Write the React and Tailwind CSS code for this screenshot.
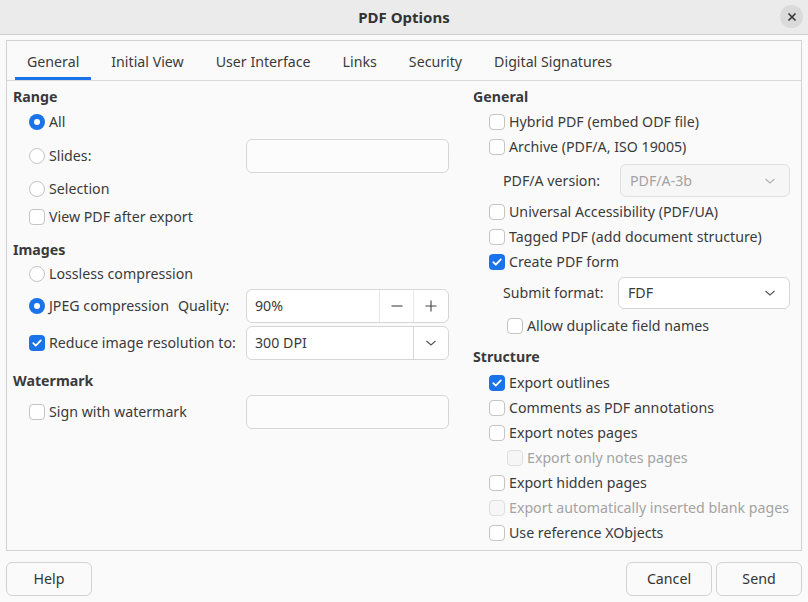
import React from 'react';

const font = { fontFamily: '"Noto Sans", "Open Sans", sans-serif' };

const Chevron = ({ className = '' }) => (
  <svg width="12" height="8" viewBox="0 0 12 8" className={className}>
    <path d="M1.5 2 L6 6 L10.5 2" fill="none" stroke="currentColor" strokeWidth="1.1" />
  </svg>
);

const Radio = ({ checked }) =>
  checked ? (
    <span className="w-4 h-4 rounded-full bg-[#1a73e8] flex items-center justify-center shrink-0">
      <span className="w-[6px] h-[6px] rounded-full bg-white" />
    </span>
  ) : (
    <span className="w-4 h-4 rounded-full border border-[#c4c4c4] bg-white shrink-0" />
  );

const Check = ({ checked, disabled }) =>
  checked ? (
    <span className="w-4 h-4 rounded-[4px] bg-[#1a73e8] flex items-center justify-center shrink-0">
      <svg width="12" height="12" viewBox="0 0 12 12">
        <path d="M2.3 6.2 L4.8 8.7 L9.8 3.4" fill="none" stroke="white" strokeWidth="1.8" strokeLinecap="round" strokeLinejoin="round" />
      </svg>
    </span>
  ) : (
    <span className={`w-4 h-4 rounded-[4px] border shrink-0 ${disabled ? 'border-[#dedede] bg-[#f6f6f6]' : 'border-[#c4c4c4] bg-white'}`} />
  );

const Heading = ({ children, className = '' }) => (
  <div className={`h-5 flex items-center font-bold text-[#3a3a3a] ${className}`}>{children}</div>
);

const RadioRow = ({ label, checked, className = '', children }) => (
  <div className={`flex items-center ${className}`}>
    <div className="flex items-center gap-1 pl-4">
      <Radio checked={checked} />
      <span>{label}</span>
    </div>
    {children}
  </div>
);

const CheckRow = ({ label, checked, disabled, indent = 'pl-4', className = 'h-6 mt-px' }) => (
  <div className={`flex items-center gap-1 ${indent} ${className} ${disabled ? 'text-[#a3a3a3]' : ''}`}>
    <Check checked={checked} disabled={disabled} />
    <span>{label}</span>
  </div>
);

const Entry = () => <div className="w-[203px] h-[34px] rounded-[6px] border border-[#d6d6d6] bg-[#fcfcfc]" />;

const Combo = ({ value, disabled, width }) => (
  <div className={`${width} h-full rounded-[6px] border flex items-center justify-between pl-[9px] pr-[13px] ${disabled ? 'border-[#e0e0e0] bg-[#f6f6f6] text-[#a3a3a3]' : 'border-[#d6d6d6] bg-white'}`}>
    <span>{value}</span>
    <Chevron className={disabled ? 'text-[#b0b0b0]' : 'text-[#555]'} />
  </div>
);

const Button = ({ children }) => (
  <button className="w-[86px] h-[34px] rounded-[6px] border border-[#d2d2d2] bg-[#fafafa] text-[#333]">{children}</button>
);

export default function App() {
  const tabs = ['General', 'Initial View', 'User Interface', 'Links', 'Security', 'Digital Signatures'];
  return (
    <div style={font} className="w-[808px] h-[602px] bg-[#fafafa] text-[14.2px] text-[#3a3a3a] flex flex-col overflow-hidden">
      <div className="h-[35px] shrink-0 bg-[#ebebeb] border-b border-[#cfcfcf] flex items-center relative">
        <div className="flex-1 text-center font-bold text-[15px] text-[#333]">PDF Options</div>
        <div className="absolute right-[5px] top-[5px] w-[23px] h-[23px] rounded-full bg-[#dadada] flex items-center justify-center">
          <svg width="10" height="10" viewBox="0 0 10 10">
            <path d="M1.5 1.5 L8.5 8.5 M8.5 1.5 L1.5 8.5" stroke="#333" strokeWidth="1.6" />
          </svg>
        </div>
      </div>

      <div className="mx-[6px] mt-[5px] h-[511px] border border-[#d2d2d2] flex flex-col">
        <div className="h-[40px] shrink-0 flex border-b border-[#d9d9d9] pl-[4px] pt-[2px]">
          {tabs.map((t, i) => (
            <div key={t} className="relative px-4 flex items-center text-[#3a3a3a]">
              {t}
              {i === 0 && <span className="absolute left-1 right-1 bottom-0 h-[3px] bg-[#1a73e8]" />}
            </div>
          ))}
        </div>

        <div className="flex pl-[6px] pr-[11px] pt-[6px] gap-[24px]">
          <div className="w-[436px] flex flex-col">
            <Heading>Range</Heading>
            <RadioRow label="All" checked className="h-6 mt-[3px]" />
            <RadioRow label="Slides:" className="h-[34px] mt-[5px] justify-between">
              <Entry />
            </RadioRow>
            <RadioRow label="Selection" className="h-6 mt-[4px]" />
            <CheckRow label="View PDF after export" className="h-6 mt-[4px]" />

            <Heading className="mt-[11px]">Images</Heading>
            <RadioRow label="Lossless compression" className="h-6 mt-[2px]" />
            <div className="h-[34px] mt-[3px] flex items-center justify-between">
              <div className="flex items-center gap-1 pl-4">
                <Radio checked />
                <span>JPEG compression</span>
                <span className="ml-[5px]">Quality:</span>
              </div>
              <div className="w-[203px] h-full rounded-[6px] border border-[#d6d6d6] bg-white flex">
                <div className="flex-1 flex items-center pl-[8px]">90%</div>
                <div className="w-[34px] border-l border-[#e8e8e8] flex items-center justify-center">
                  <svg width="12" height="12" viewBox="0 0 12 12"><path d="M0.5 6 H11.5" stroke="#444" strokeWidth="1.1" /></svg>
                </div>
                <div className="w-[35px] border-l border-[#e8e8e8] flex items-center justify-center">
                  <svg width="12" height="12" viewBox="0 0 12 12"><path d="M0.5 6 H11.5 M6 0.5 V11.5" stroke="#444" strokeWidth="1.1" /></svg>
                </div>
              </div>
            </div>
            <div className="h-[34px] mt-[3px] flex items-center justify-between">
              <div className="flex items-center gap-1 pl-4">
                <Check checked />
                <span>Reduce image resolution to:</span>
              </div>
              <div className="w-[203px] h-full rounded-[6px] border border-[#d6d6d6] bg-white flex">
                <div className="flex-1 flex items-center pl-[8px]">300 DPI</div>
                <div className="w-[35px] border-l border-[#d6d6d6] flex items-center justify-center text-[#555]">
                  <Chevron />
                </div>
              </div>
            </div>

            <Heading className="mt-[11px]">Watermark</Heading>
            <div className="h-[34px] mt-[4px] flex items-center justify-between">
              <div className="flex items-center gap-1 pl-4">
                <Check />
                <span>Sign with watermark</span>
              </div>
              <Entry />
            </div>
          </div>

          <div className="flex-1 flex flex-col">
            <Heading>General</Heading>
            <CheckRow label="Hybrid PDF (embed ODF file)" className="h-6 mt-[3px]" />
            <CheckRow label="Archive (PDF/A, ISO 19005)" />
            <div className="h-[33px] mt-[5px] flex items-center justify-between pl-[30px]">
              <span>PDF/A version:</span>
              <Combo value="PDF/A-3b" disabled width="w-[170px]" />
            </div>
            <CheckRow label="Universal Accessibility (PDF/UA)" className="h-6 mt-[3px]" />
            <CheckRow label="Tagged PDF (add document structure)" />
            <CheckRow label="Create PDF form" checked />
            <div className="h-[32px] mt-[3px] flex items-center justify-between pl-[30px]">
              <span>Submit format:</span>
              <Combo value="FDF" width="w-[172px]" />
            </div>
            <CheckRow label="Allow duplicate field names" indent="pl-[34px]" className="h-6 mt-[5px]" />

            <Heading className="mt-[9px]">Structure</Heading>
            <CheckRow label="Export outlines" checked className="h-6 mt-[4px]" />
            <CheckRow label="Comments as PDF annotations" />
            <CheckRow label="Export notes pages" />
            <CheckRow label="Export only notes pages" disabled indent="pl-[34px]" />
            <CheckRow label="Export hidden pages" />
            <CheckRow label="Export automatically inserted blank pages" disabled />
            <CheckRow label="Use reference XObjects" />
          </div>
        </div>
      </div>

      <div className="flex items-center justify-between px-[6px] mt-[11px]">
        <Button>Help</Button>
        <div className="flex gap-[4px]">
          <Button>Cancel</Button>
          <Button>Send</Button>
        </div>
      </div>
    </div>
  );
}
